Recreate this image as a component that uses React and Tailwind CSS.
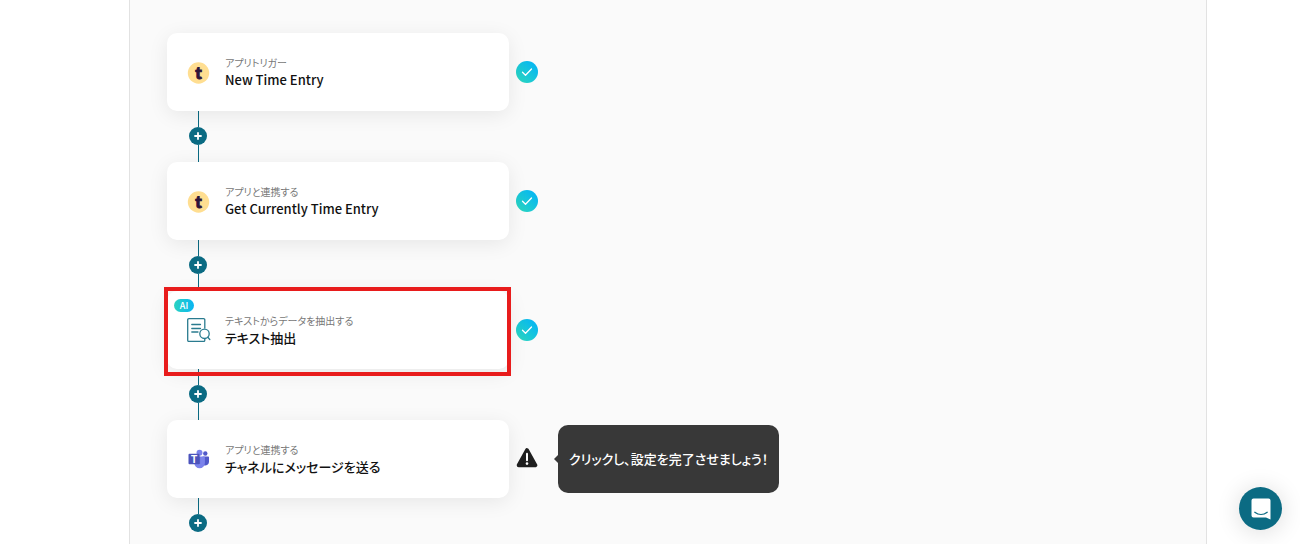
import React from 'react'

function TogglIcon() {
  return (
    <svg className="h-6 w-6" viewBox="0 0 24 24" aria-hidden="true">
      <circle cx="11.500" cy="13" r="10.700" fill="#ffde91" />
      <text x="11.500" y="18.500" textAnchor="middle" fontFamily="Lato, sans-serif" fontSize="17" fontWeight="900" fill="#2c1338" stroke="#2c1338" strokeWidth="1">
        t
      </text>
    </svg>
  )
}

function ExtractIcon() {
  return (
    <svg className="h-6 w-6" viewBox="0 0 24 24" fill="none" stroke="#2a7b8f" strokeWidth="1.3" strokeLinecap="round" strokeLinejoin="round" aria-hidden="true">
      <path d="M17.800 10V1.900a1.200 1.200 0 0 0-1.200-1.200H1.900A1.200 1.200 0 0 0 .7 1.900v20.400a1.200 1.200 0 0 0 1.200 1.200h14.700a1.200 1.200 0 0 0 1.200-1.200V21" />
      <path d="M4.800 6.500h8.700M4.800 10.500h8.700M4.800 14h6.200" />
      <circle cx="17.500" cy="15.800" r="4.700" />
      <path d="M20.800 19.300l2 2.200" />
    </svg>
  )
}

function TeamsIcon() {
  return (
    <svg className="h-6 w-6" viewBox="0 0 24 24" aria-hidden="true">
      <circle cx="18.300" cy="6.500" r="2.200" fill="#5059c9" />
      <path d="M15.500 9.500h5.700c.5 0 .8.400.8.800v4.700a3.600 3.600 0 0 1-5.500 3z" fill="#5059c9" />
      <circle cx="12.500" cy="5.700" r="3" fill="#7b83eb" />
      <path d="M7.800 9.500h9.200c.5 0 .9.400.9.900v5.600a5.300 5.300 0 0 1-10.600 0v-5.600c0-.5.200-.9.500-.9z" fill="#7b83eb" />
      <path d="M7.300 9.500h5.800v7.600H7.400z" fill="#4a50b8" opacity=".6" />
      <rect x="1.500" y="6.700" width="11" height="10.600" rx="1" fill="#4b53bc" />
      <text x="7" y="15.500" textAnchor="middle" fontFamily="Inter, sans-serif" fontSize="10" fontWeight="700" fill="#fff">
        T
      </text>
    </svg>
  )
}

function DoneMark() {
  return (
    <span role="img" aria-label="設定済み" className="flex h-[22px] w-[22px] items-center justify-center rounded-full bg-linear-to-tr from-[#2fd8b8] to-[#06b0fa]">
      <svg className="h-3 w-3" viewBox="0 0 12 12" fill="none" stroke="#fff" strokeWidth="1.300" strokeLinecap="round" strokeLinejoin="round">
        <path d="M1.500 6.200l3 3L10.500 3" />
      </svg>
    </span>
  )
}

function WarningMark() {
  return (
    <svg role="img" aria-label="未完了" className="h-[22px] w-[22px]" viewBox="0 0 22 22">
      <path d="M11 2.200L19.300 17.300H2.700z" fill="#1f1f1f" stroke="#1f1f1f" strokeWidth="4" strokeLinejoin="round" />
      <path d="M11 5.800v6.400" stroke="#fff" strokeWidth="2" strokeLinecap="round" />
      <circle cx="11" cy="15.600" r="1.300" fill="#fff" />
    </svg>
  )
}

// Линия с кнопкой "добавить"
function Connector({ last }) {
  return (
    <div className="ml-[22px] flex w-[18px] flex-col items-center">
      <span className="h-4 w-px bg-[#0b6b83]" />
      <button type="button" aria-label="追加" className="flex h-[18px] w-[18px] items-center justify-center rounded-full bg-[#0b6b83]">
        <svg className="h-2 w-2" viewBox="0 0 8 8" stroke="#fff" strokeWidth="1.800" strokeLinecap="round">
          <path d="M4 1v6M1 4h6" />
        </svg>
      </button>
      {!last && <span className="h-[17px] w-px bg-[#0b6b83]" />}
    </div>
  )
}

function Step({ step, last }) {
  const Icon = step.icon
  return (
    <li>
      <div className="flex items-center gap-[7px]">
        <div className="relative">
          <button type="button" className="flex h-[78px] w-[342px] items-center gap-[14px] rounded-[10px] bg-white pl-5 text-left shadow-[0_4px_20px_rgba(0,0,0,0.08)]">
            <Icon />
            <span className="flex flex-col">
              <span className="text-[10px] leading-4 text-[#777]">{step.kind}</span>
              <span className="text-[13px] leading-[18px] font-medium text-[#111]">{step.title}</span>
            </span>
          </button>
          {step.ai && (
            <span className="absolute top-2 left-[7px] flex h-[13px] w-5 items-center justify-center rounded-full bg-linear-to-r from-[#2bd3c0] to-[#0bb4f2] text-[9px] font-medium text-white">
              AI
            </span>
          )}
          {step.selected && (
            <span className="pointer-events-none absolute -top-1 -right-0.5 -bottom-[7px] -left-[3px] z-10 border-4 border-[#e81c1c]" />
          )}
        </div>
        {step.hint ? <WarningMark /> : <DoneMark />}
        {step.hint && (
          <div className="relative -my-1 ml-[13px] flex h-[68px] items-center rounded-[10px] bg-[#383838] px-[11px] text-[13px] font-medium text-white">
            <span className="absolute top-[30px] -left-1 h-0 w-0 border-y-4 border-r-4 border-y-transparent border-r-[#383838]" />
            {step.hint}
          </div>
        )}
      </div>
      <Connector last={last} />
    </li>
  )
}

const steps = [
  { kind: 'アプリトリガー', title: 'New Time Entry', icon: TogglIcon },
  { kind: 'アプリと連携する', title: 'Get Currently Time Entry', icon: TogglIcon },
  { kind: 'テキストからデータを抽出する', title: 'テキスト抽出', icon: ExtractIcon, ai: true, selected: true },
  { kind: 'アプリと連携する', title: 'チャネルにメッセージを送る', icon: TeamsIcon, hint: 'クリックし、設定を完了させましょう！' },
]

function App() {
  return (
    <div className="min-h-screen bg-white pr-[93px] pl-[129px] font-['Noto_Sans_CJK_JP',sans-serif] [font-feature-settings:'palt']">
      <main className="min-h-screen border-x border-[#e2e2e2] bg-[#fafafa] pt-[33px] pl-[37px]">
        <ol>
          {steps.map((step, i) => (
            <Step key={step.title} step={step} last={i === steps.length - 1} />
          ))}
        </ol>
      </main>

      {/* Кнопка чата */}
      <button type="button" aria-label="チャット" className="fixed right-[18px] bottom-[14px] flex h-[43px] w-[43px] items-center justify-center rounded-full bg-[#0b6b83] shadow-[0_2px_24px_rgba(0,0,0,0.14)]">
        <svg className="h-[22px] w-5" viewBox="0 0 20 22" aria-hidden="true">
          <path d="M2.500.500h15A2 2 0 0 1 19.500 2.500V21.500l-4.500-2H2.500a2 2 0 0 1-2-2v-15a2 2 0 0 1 2-2z" fill="#fff" />
          <path d="M3.800 14.300c3.700 2.800 8.700 2.800 12.400 0" fill="none" stroke="#0b6b83" strokeWidth="1.300" strokeLinecap="round" />
        </svg>
      </button>
    </div>
  )
}

export default App
